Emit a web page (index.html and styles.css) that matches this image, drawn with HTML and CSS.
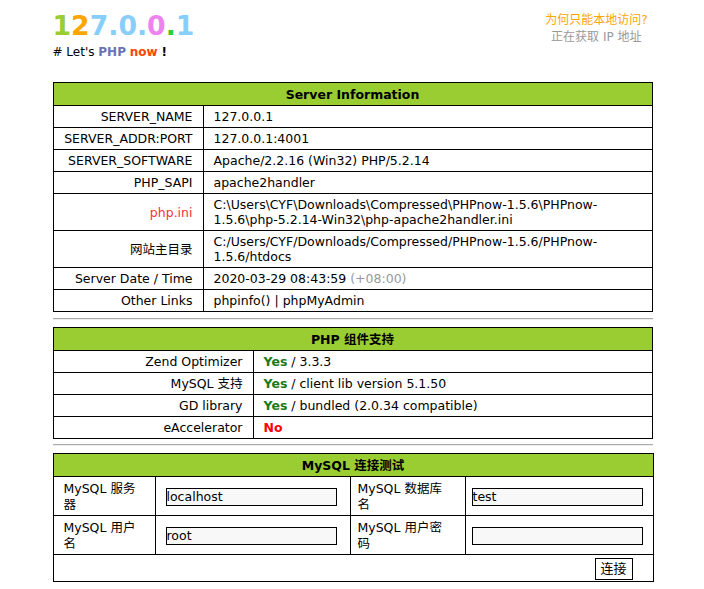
FILE: index.html
```html
<!DOCTYPE html>
<html lang="zh">
<head>
<meta charset="utf-8">
<title>Let's PHP now !</title>
<link rel="stylesheet" href="styles.css">
</head>
<body>
<div class="page">
  <header class="top">
    <div class="brand">
      <h1 class="ip"><span class="c1">1</span><span class="c2">2</span><span class="c3">7</span><span class="c3">.</span><span class="c3">0</span><span class="c3">.</span><span class="c4">0</span><span class="c5">.</span><span class="c3">1</span></h1>
      <p class="slogan"># Let's <b class="php">PHP</b> <b class="now">now</b> <b>!</b></p>
    </div>
    <div class="note">
      <a class="why">为何只能本地访问?</a>
      <span class="getip">正在获取 IP 地址</span>
    </div>
  </header>

  <table class="info">
    <colgroup><col class="k1"><col></colgroup>
    <tr><th colspan="2">Server Information</th></tr>
    <tr><td class="lbl">SERVER_NAME</td><td>127.0.0.1</td></tr>
    <tr><td class="lbl">SERVER_ADDR:PORT</td><td>127.0.0.1:4001</td></tr>
    <tr><td class="lbl">SERVER_SOFTWARE</td><td>Apache/2.2.16 (Win32) PHP/5.2.14</td></tr>
    <tr><td class="lbl">PHP_SAPI</td><td>apache2handler</td></tr>
    <tr><td class="lbl red">php.ini</td><td>C:\Users\CYF\Downloads\Compressed\PHPnow-1.5.6\PHPnow-1.5.6\php-5.2.14-Win32\php-apache2handler.ini</td></tr>
    <tr><td class="lbl">网站主目录</td><td>C:/Users/CYF/Downloads/Compressed/PHPnow-1.5.6/PHPnow-1.5.6/htdocs</td></tr>
    <tr><td class="lbl">Server Date / Time</td><td>2020-03-29 08:43:59 <span class="tz">(+08:00)</span></td></tr>
    <tr><td class="lbl">Other Links</td><td>phpinfo() | phpMyAdmin</td></tr>
  </table>

  <hr class="sep">

  <table class="info">
    <colgroup><col class="k2"><col></colgroup>
    <tr><th colspan="2">PHP 组件支持</th></tr>
    <tr><td class="lbl">Zend Optimizer</td><td><b class="yes">Yes</b> / 3.3.3</td></tr>
    <tr><td class="lbl">MySQL 支持</td><td><b class="yes">Yes</b> / client lib version 5.1.50</td></tr>
    <tr><td class="lbl">GD library</td><td><b class="yes">Yes</b> / bundled (2.0.34 compatible)</td></tr>
    <tr><td class="lbl">eAccelerator</td><td><b class="no">No</b></td></tr>
  </table>

  <hr class="sep sep2">

  <form class="dbform">
  <table class="info db">
    <colgroup><col class="m1"><col class="m2"><col class="m3"><col class="m4"></colgroup>
    <tr><th colspan="4">MySQL 连接测试</th></tr>
    <tr>
      <td>MySQL 服务器</td><td><input class="field" type="text" value="localhost"></td>
      <td class="lb2">MySQL 数据库名</td><td class="in2"><input class="field" type="text" value="test"></td>
    </tr>
    <tr>
      <td>MySQL 用户名</td><td><input class="field" type="text" value="root"></td>
      <td class="lb2">MySQL 用户密码</td><td class="in2"><input class="field" type="password" value=""></td>
    </tr>
    <tr><td colspan="4" class="act"><button type="button" class="btn">连接</button></td></tr>
  </table>
  </form>
</div>
</body>
</html>
```

FILE: styles.css
```css
html, body {
  margin: 0;
  padding: 0;
  background: #fff;
}
body {
  font-family: "DejaVu Sans", Verdana, "Noto Sans CJK SC", sans-serif;
  font-size: 12.5px;
  color: #000;
}
.page {
  width: 600px;
  margin: 0 auto;
  padding-left: 1px;
}
.top {
  display: flex;
  justify-content: space-between;
  align-items: flex-start;
  height: 82px;
}
.brand {
  padding-top: 11px;
}
.ip {
  margin: 0;
  font-family: "DejaVu Sans", Verdana, sans-serif;
  font-size: 26.7px;
  font-weight: bold;
  line-height: 30px;
  letter-spacing: 0;
}
.c1 { color: #9acd32; }
.c2 { color: #ffa500; }
.c3 { color: #87cefa; }
.c4 { color: #ee82ee; }
.c5 { color: #32cd32; }
.slogan {
  margin: 3px 0 0 0;
  font-size: 12px;
  line-height: 16px;
}
.php { color: #6a74b4; }
.now { color: #ff4500; }
.note {
  display: flex;
  flex-direction: column;
  align-items: center;
  padding-top: 12px;
  padding-right: 5px;
  font-size: 12px;
  line-height: 17px;
  font-family: "DejaVu Sans", "Noto Sans CJK SC", sans-serif;
}
.why { color: #ffa500; }
.getip { color: #999; }

.info {
  width: 600px;
  border-collapse: collapse;
  table-layout: fixed;
  border: 1px solid #000;
}
.info th {
  background: #9acd32;
  border: 1px solid #000;
  font-weight: bold;
  font-size: 12.5px;
  line-height: 15px;
  padding: 4px 10px 3px;
  text-align: center;
}
.info td {
  border: 1px solid #000;
  padding: 3px 10px;
  line-height: 15px;
  vertical-align: middle;
  word-wrap: break-word;
}
.k1 { width: 150px; }
.k2 { width: 200px; }
.lbl { text-align: right; }
.red { color: #f33; }
.tz { color: #999; }
.yes { color: #1a7a1a; }
.no { color: #f00; }

.sep {
  margin: 6px 0 7px;
  border: 0;
  border-top: 1px solid #aaa;
  border-bottom: 1px solid #eee;
  height: 0;
}
.sep2 {
  margin-top: 5px;
  margin-bottom: 7px;
}

.dbform { margin: 0; }
.m1 { width: 102px; }
.m2 { width: 195px; }
.m3 { width: 115px; }
.m4 { width: 188px; }
.db td {
  padding: 4px 10px 3px;
  line-height: 15.5px;
  text-align: left;
}
.db td.lb2 {
  padding-left: 7px;
  padding-right: 13px;
}
.db td.in2 {
  padding-left: 6px;
}
.field {
  width: 171px;
  height: 18px;
  box-sizing: border-box;
  border: 1px solid #000;
  background: #f8f8f8;
  padding: 0;
  font-family: "DejaVu Sans", sans-serif;
  font-size: 12.5px;
  color: #000;
  display: block;
}
.db td.act {
  text-align: right;
  padding: 3px 20px 1px 10px;
}
.btn {
  font-family: "DejaVu Sans", "Noto Sans CJK SC", sans-serif;
  font-size: 13px;
  background: #fff;
  border: 1px solid #000;
  padding: 1px 5px;
  height: 22px;
  line-height: 18px;
}
```
